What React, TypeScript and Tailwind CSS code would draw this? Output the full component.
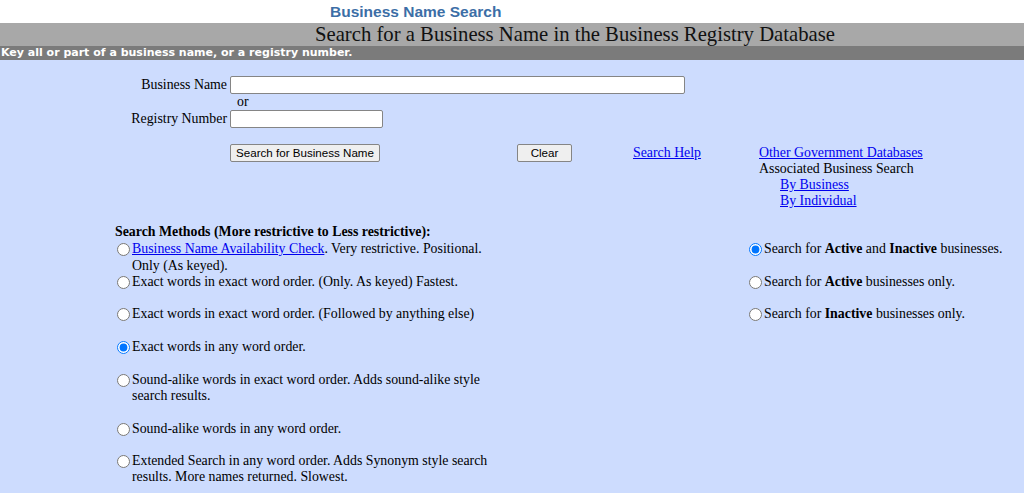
import React from "react";

const serif = "font-['Liberation_Serif','Times_New_Roman',serif]";
const link = "text-[#0000ee] underline";

function Option({
  name,
  checked,
  width,
  children,
}: {
  name: string;
  checked?: boolean;
  width: string;
  children: React.ReactNode;
}) {
  return (
    <label className="flex items-start">
      <input
        type="radio"
        name={name}
        defaultChecked={checked}
        className="mx-[2px] mt-[2px] h-[13px] w-[13px] shrink-0"
      />
      <span className={width}>{children}</span>
    </label>
  );
}

export default function App() {
  return (
    <div className={`min-h-screen bg-[#cddcfe] text-[13.85px] leading-[16.3px] text-black ${serif}`}>
      {/* page headers */}
      <div className="h-[23px] bg-white pl-[330px] font-['Liberation_Sans',Arial,sans-serif] text-[15.5px] font-bold leading-[23px] text-[#3c6ea6]">
        Business Name Search
      </div>
      <div className="h-[23px] bg-[#a8a8a8] pl-[315px] text-[20.7px] leading-[23px] text-[#111]">
        Search for a Business Name in the Business Registry Database
      </div>
      <div className="h-[14px] bg-[#7b7b7b] pl-[1px] font-['DejaVu_Sans',Verdana,sans-serif] text-[11px] font-bold leading-[14px] text-white">
        Key all or part of a business name, or a registry number.
      </div>

      {/* search inputs */}
      <div className="pt-[16px]">
        <div className="flex h-[18px] items-center">
          <span className="w-[227px] text-right">Business Name</span>
          <input
            type="text"
            className="ml-[3px] h-[18px] w-[455px] rounded-[2px] border border-[#858585] bg-white"
          />
        </div>
        <div className="h-[16px] pl-[237px] leading-[16px]">or</div>
        <div className="flex h-[18px] items-center">
          <span className="w-[227px] text-right">Registry Number</span>
          <input
            type="text"
            className="ml-[3px] h-[18px] w-[153px] rounded-[2px] border border-[#858585] bg-white"
          />
        </div>
      </div>

      {/* buttons and links */}
      <div className="mt-[16px] flex items-start pl-[230px]">
        <button className="h-[18px] w-[150px] whitespace-nowrap rounded-[2px] border border-[#858585] bg-[#efefef] font-['Liberation_Sans',Arial,sans-serif] text-[11.6px] leading-[16px]">
          Search for Business Name
        </button>
        <button className="ml-[137px] h-[18px] w-[55px] rounded-[2px] border border-[#858585] bg-[#efefef] font-['Liberation_Sans',Arial,sans-serif] text-[11.6px] leading-[16px]">
          Clear
        </button>
        <span className="ml-[61px] mt-[1px] w-[126px] leading-[16px]">
          <a href="#" className={link}>
            Search Help
          </a>
        </span>
        <div className="mt-[1px] leading-[16px]">
          <a href="#" className={link}>
            Other Government Databases
          </a>
          <div>Associated Business Search</div>
          <div className="pl-[21px]">
            <a href="#" className={link}>
              By Business
            </a>
          </div>
          <div className="pl-[21px]">
            <a href="#" className={link}>
              By Individual
            </a>
          </div>
        </div>
      </div>

      {/* search methods */}
      <div className="mt-[15px] pl-[115px] font-bold">
        Search Methods (More restrictive to Less restrictive):
      </div>
      <div className="mt-[1px] flex pb-[8px]">
        <div className="flex w-[750px] flex-col pl-[115px]">
          <Option name="method" width="w-[365px]">
            <a href="#" className={link}>
              Business Name Availability Check
            </a>
            . Very restrictive. Positional. Only (As keyed).
          </Option>
          <div className="flex flex-col gap-[16.3px]">
            <Option name="method" width="w-[365px]">
              Exact words in exact word order. (Only. As keyed) Fastest.
            </Option>
            <Option name="method" width="w-[365px]">
              Exact words in exact word order. (Followed by anything else)
            </Option>
            <Option name="method" checked width="w-[365px]">
              Exact words in any word order.
            </Option>
            <Option name="method" width="w-[365px]">
              Sound-alike words in exact word order. Adds sound-alike style search results.
            </Option>
            <Option name="method" width="w-[365px]">
              Sound-alike words in any word order.
            </Option>
            <Option name="method" width="w-[365px]">
              Extended Search in any word order. Adds Synonym style search results. More names
              returned. Slowest.
            </Option>
          </div>
        </div>
        <div className="flex flex-col gap-[16.3px]">
          <Option name="status" checked width="w-[260px]">
            Search for <b>Active</b> and <b>Inactive</b> businesses.
          </Option>
          <Option name="status" width="w-[260px]">
            Search for <b>Active</b> businesses only.
          </Option>
          <Option name="status" width="w-[260px]">
            Search for <b>Inactive</b> businesses only.
          </Option>
        </div>
      </div>
    </div>
  );
}
